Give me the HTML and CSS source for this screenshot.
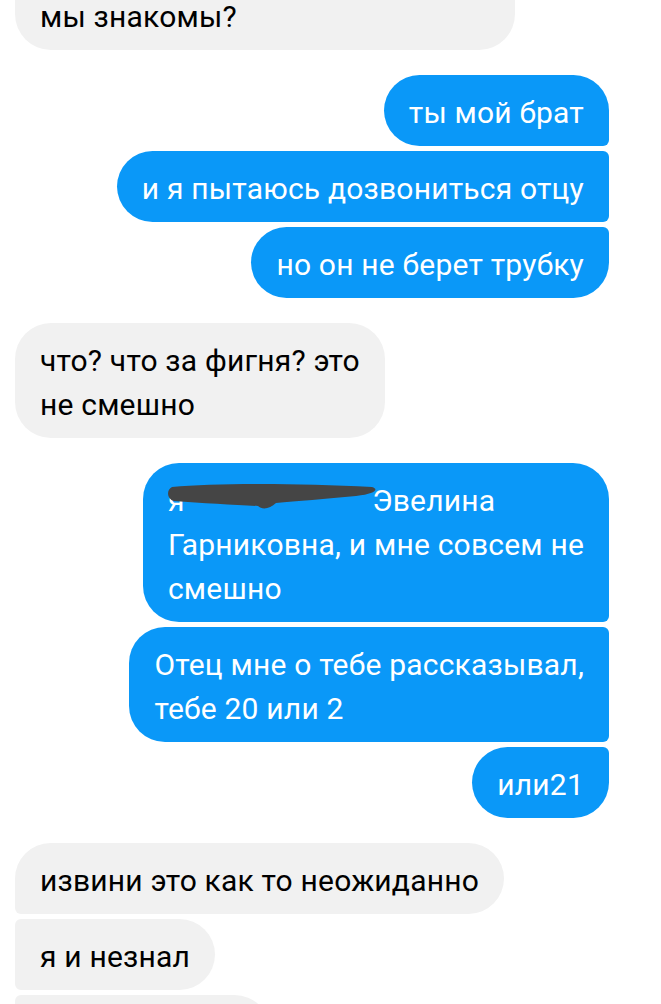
FILE: index.html
```html
<!DOCTYPE html>
<html lang="ru">
    <head>
        <meta charset="UTF-8">
        <meta name="viewport" content="width=device-width, initial-scale=1.0">
        <title>Чат</title>
        <link rel="stylesheet" href="styles.css">
    </head>
    <body>
        <div class="chat">
            <div class="msg in cut">мы знакомы?</div>

            <div class="group">
                <div class="msg out first">ты мой брат</div>
                <div class="msg out mid">и я пытаюсь дозвониться отцу</div>
                <div class="msg out last">но он не берет трубку</div>
            </div>

            <div class="group">
                <div class="msg in">что? что за фигня? это<br>не смешно</div>
            </div>

            <div class="group">
                <div class="msg out first">я <span class="redact"><svg viewBox="0 0 214 34" width="214" height="34"><path d="M6 8 C50 4 130 4 206 8 C213 10 210 15 190 17 C160 20 130 22 110 24 C104 30 96 31 92 27 C70 26 36 24 8 22 C1 20 0 11 6 8 Z" fill="#454545"/></svg></span>Эвелина<br>Гарниковна, и мне совсем не<br>смешно</div>
                <div class="msg out mid">Отец мне о тебе рассказывал,<br>тебе 20 или 2</div>
                <div class="msg out last">или21</div>
            </div>

            <div class="group">
                <div class="msg in first">извини это как то неожиданно</div>
                <div class="msg in mid">я и незнал</div>
                <div class="msg in mid tail">&nbsp;</div>
            </div>
        </div>
    </body>
</html>
```

FILE: styles.css
```css
body {
    margin: 0;
    background-color: #fff;
    font-family: "Roboto", "Noto Sans", sans-serif;
    overflow: hidden;
}
.chat {
    display: flex;
    flex-direction: column;
    gap: 25px;
    padding: 0 52px 0 15px;
}
.group {
    display: flex;
    flex-direction: column;
    gap: 5px;
}
.msg {
    font-size: 30px;
    letter-spacing: 0.2px;
    line-height: 44px;
    padding: 15.5px 25px 11.5px;
    border-radius: 36px;
    width: fit-content;
    box-sizing: border-box;
}
.in {
    background-color: #f1f1f1;
    color: #000;
    align-self: flex-start;
}
.out {
    background-color: #0a98f8;
    color: #fff;
    align-self: flex-end;
}
.out.first {
    border-bottom-right-radius: 6px;
}
.out.mid {
    border-top-right-radius: 6px;
    border-bottom-right-radius: 6px;
}
.out.last {
    border-top-right-radius: 6px;
}
.in.first {
    border-bottom-left-radius: 6px;
}
.in.mid {
    border-top-left-radius: 6px;
    border-bottom-left-radius: 6px;
}
.cut {
    width: 500px;
    line-height: 32px;
    padding-top: 1px;
    padding-bottom: 17px;
    border-top-left-radius: 0;
    border-top-right-radius: 0;
}
.tail {
    width: 255px;
}
.redact {
    display: inline-block;
    width: 180px;
    height: 20px;
    position: relative;
    vertical-align: baseline;
}
.redact svg {
    position: absolute;
    left: -26px;
    top: -12px;
}
```
